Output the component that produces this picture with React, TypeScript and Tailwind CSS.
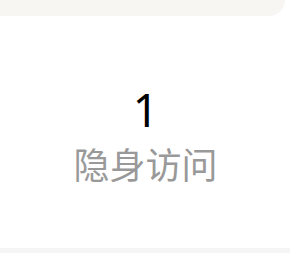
export default function App() {
  return (
    <div className="flex h-[253px] w-[291px] flex-col bg-white" style={{ fontFamily: '"Noto Sans", "Noto Sans CJK SC", sans-serif' }}>
      <div className="h-4 w-[285px] rounded-br-2xl bg-[#f7f6f2]" />
      <div className="flex flex-1 flex-col items-center pt-[69px]">
        <div className="text-[45px] leading-[50px] text-black">1</div>
        <div className="mt-[6px] text-[36px] leading-[44px] text-[#999999]" style={{ fontFamily: '"Noto Sans CJK SC", sans-serif' }}>
          隐身访问
        </div>
      </div>
      <div className="h-[5px] w-[290px] bg-[#f5f5f5]" />
    </div>
  );
}
